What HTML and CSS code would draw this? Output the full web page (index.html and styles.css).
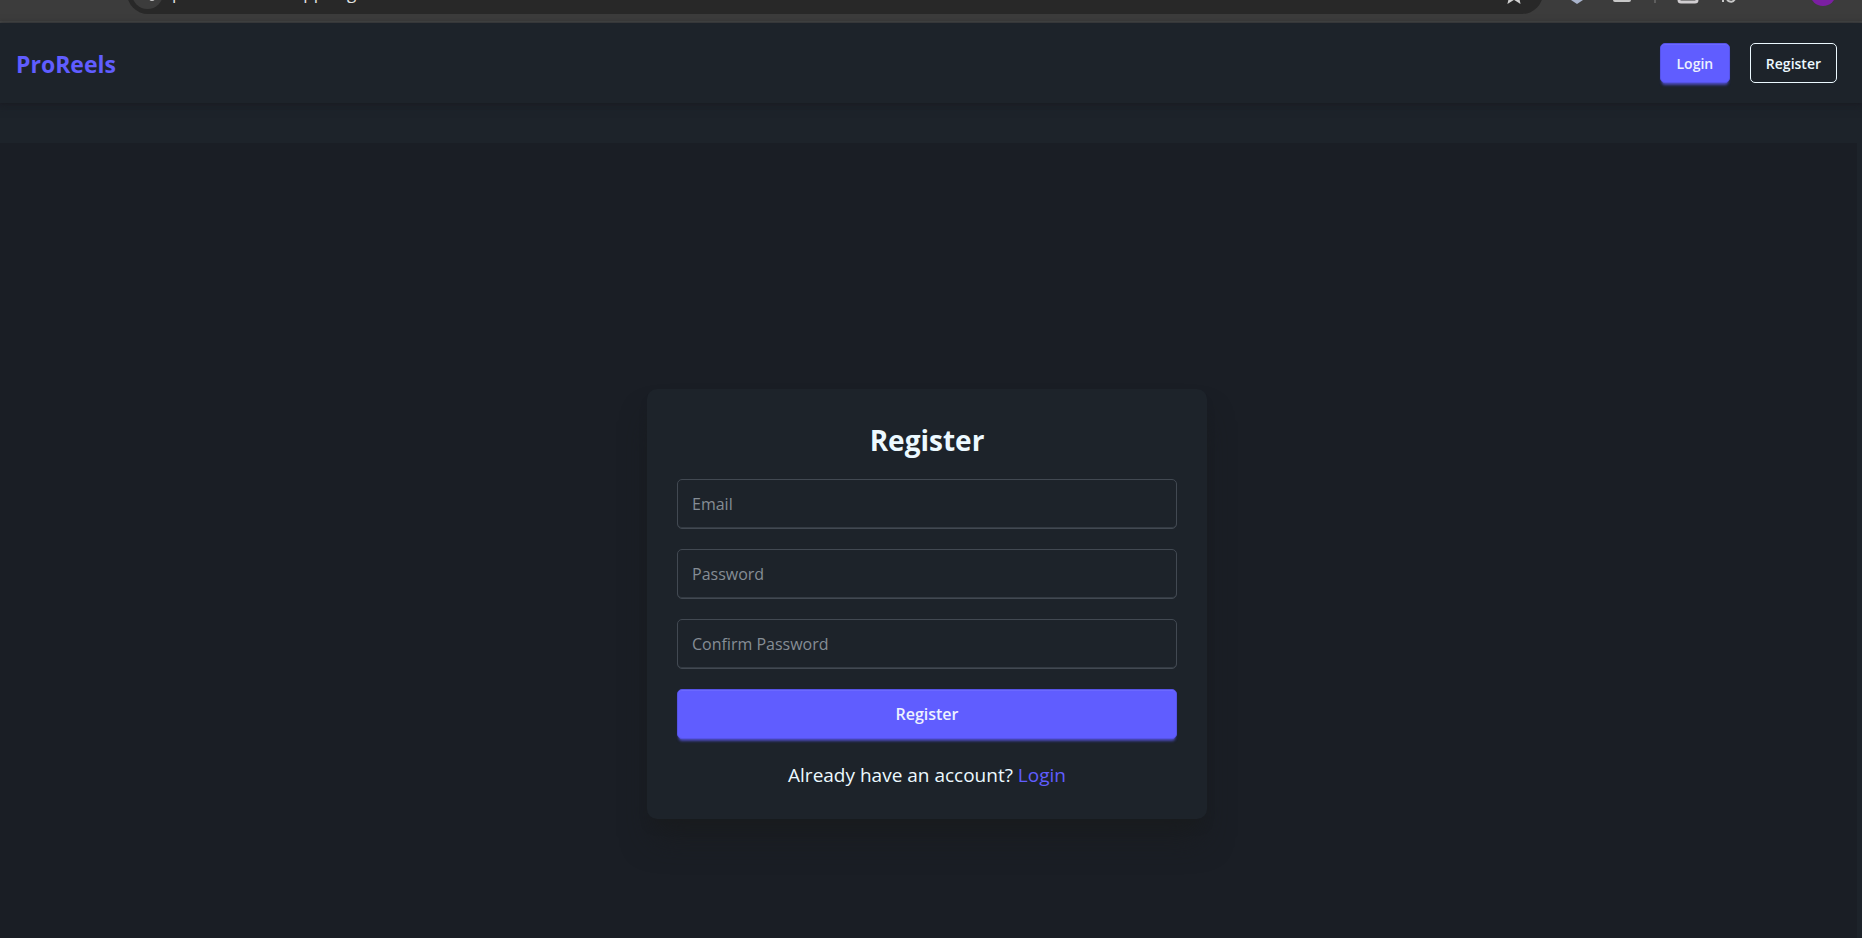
FILE: index.html
```html
<!DOCTYPE html>
<html lang="en">
<head>
<meta charset="utf-8">
<title>ProReels</title>
<link rel="stylesheet" href="styles.css">
</head>
<body>
<div class="chrome">
  <div class="omnibox">
    <span class="site-info"><svg width="16" height="16" viewBox="0 0 16 16"><circle cx="12" cy="13" r="2" fill="none" stroke="#c7c7c7" stroke-width="2"/></svg></span>
    <span class="url">proreels.vercel.app/register</span>
    <svg class="star" width="20" height="20" viewBox="0 0 20 20"><path d="M9 3l2.400 5.600 6 .5-4.600 4 1.400 5.900L9 15.800 3.800 19l1.400-5.900-4.600-4 6-.5z" fill="none" stroke="#d0d0d0" stroke-width="1.800"/></svg>
  </div>
  <div class="tools">
    <svg class="tool-a" width="20" height="20" viewBox="0 0 20 20"><path d="M10 3l7 11-1 3-6 4-6-4-1-3z" fill="#a9b4cc"/></svg>
    <svg class="tool-b" width="20" height="20" viewBox="0 0 20 20"><rect x="2" y="3" width="16" height="15" rx="1" fill="#777" stroke="#c7c7c7" stroke-width="2"/></svg>
    <span class="divider"></span>
    <svg class="tool-c" width="20" height="20" viewBox="0 0 20 20"><rect x="1" y="3" width="18" height="16" rx="2" fill="none" stroke="#d0cdd0" stroke-width="3"/></svg>
    <svg class="tool-d" width="20" height="20" viewBox="0 0 20 20"><path d="M3 16v3M7 17q5 4 8-1" fill="none" stroke="#c7c7c7" stroke-width="2"/></svg>
    <span class="avatar"></span>
  </div>
</div>
<header class="navbar">
  <a class="brand" href="#">ProReels</a>
  <nav class="actions">
    <button class="btn btn-small btn-primary" type="button">Login</button>
    <button class="btn btn-small btn-outline" type="button">Register</button>
  </nav>
</header>
<main class="page">
  <form class="card">
    <h1 class="title">Register</h1>
    <input class="field" type="email" placeholder="Email" aria-label="Email">
    <input class="field" type="password" placeholder="Password" aria-label="Password">
    <input class="field" type="password" placeholder="Confirm Password" aria-label="Confirm Password">
    <button class="btn btn-primary" type="button">Register</button>
    <p class="note">Already have an account? <a href="#">Login</a></p>
  </form>
</main>
</body>
</html>
```
FILE: styles.css
```css
* { box-sizing: border-box; }
html { height: 100%; }
body {
  display: flex;
  flex-direction: column;
  height: 100%;
  margin: 0;
  overflow: hidden;
  background: #1d232a;
  color: #ecf9ff;
  font-family: "Open Sans", "Noto Sans", sans-serif;
}
svg { overflow: visible; }
.chrome {
  display: flex;
  flex: none;
  align-items: flex-end;
  height: 23px;
  padding: 0 20px 7px 127px;
  overflow: hidden;
  background: #3c3c3c;
  border-bottom: 2px solid #464746;
}
.omnibox {
  display: flex;
  flex: 1;
  align-items: center;
  height: 42px;
  padding: 0 18px 0 5px;
  border-radius: 21px;
  background: #282828;
}
.site-info {
  display: flex;
  align-items: center;
  justify-content: center;
  width: 31px;
  height: 31px;
  border-radius: 50%;
  background: #3c3c3c;
}
.url {
  flex: 1;
  padding-left: 9px;
  color: #e3e3e3;
  font-size: 17px;
  line-height: 24px;
}
.tools {
  display: flex;
  align-items: center;
  height: 42px;
  margin-left: 24px;
}
.tool-b { margin-left: 25px; }
.divider {
  width: 2px;
  height: 20px;
  margin: 0 22px;
  background: #5e5e5e;
}
.tool-d { margin-left: 22px; }
.avatar {
  width: 26px;
  height: 26px;
  margin: 0 6px 0 70px;
  border-radius: 50%;
  background: #7b1fa2;
}
.navbar {
  display: flex;
  flex: none;
  align-items: center;
  justify-content: space-between;
  height: 80px;
  padding: 0 25px 0 16px;
  box-shadow: 0 1px 4px #1a1b23, 0 3px 8px #1a1b2380;
}
.brand {
  padding-top: 2px;
  color: #605dff;
  font-size: 23px;
  font-weight: 700;
  text-decoration: none;
}
.actions { display: flex; gap: 20px; }
.btn {
  height: 50px;
  padding: 0 15px;
  border: 1px solid #5653e6;
  border-radius: 5px;
  font: 600 16px "Open Sans", "Noto Sans", sans-serif;
}
.btn-small {
  min-width: 70px;
  height: 40px;
  font-size: 14px;
}
.btn-primary {
  background: #605dff;
  color: #edf1fe;
  box-shadow: inset 0 1px #6c69ff, 0 4px 3px -2px #605dff80, 0 3px 3px -2px #605dff80;
}
.btn-outline {
  border-color: #ecf9ff;
  background: transparent;
  color: #ecf9ff;
}
.page {
  display: flex;
  flex: 1;
  align-items: flex-start;
  justify-content: center;
  margin: 40px 5px 0 0;
  padding: 246px 3px 0 0;
  background: #1a1e25;
}
.card {
  display: flex;
  flex-direction: column;
  gap: 20px;
  width: 560px;
  padding: 30px;
  border-radius: 10px;
  background: #1d232a;
  box-shadow: 0 25px 31px -6px #191c1ecc, 0 10px 13px -8px #191c1e;
}
.title {
  margin: 0;
  padding-top: 2px;
  font-size: 28px;
  font-weight: 700;
  line-height: 38px;
  text-align: center;
}
.field {
  width: 100%;
  height: 50px;
  padding: 0 14px;
  border: 1px solid #424952;
  border-radius: 5px;
  background: transparent;
  color: #ecf9ff;
  font: 16px "Open Sans", "Noto Sans", sans-serif;
  box-shadow: inset 0 -1px #343b43;
}
.field::placeholder { color: #858d95; }
.note {
  margin: 0;
  padding-top: 2px;
  font-size: 19px;
  line-height: 28px;
  text-align: center;
}
.note a { color: #605dff; text-decoration: none; }
```
